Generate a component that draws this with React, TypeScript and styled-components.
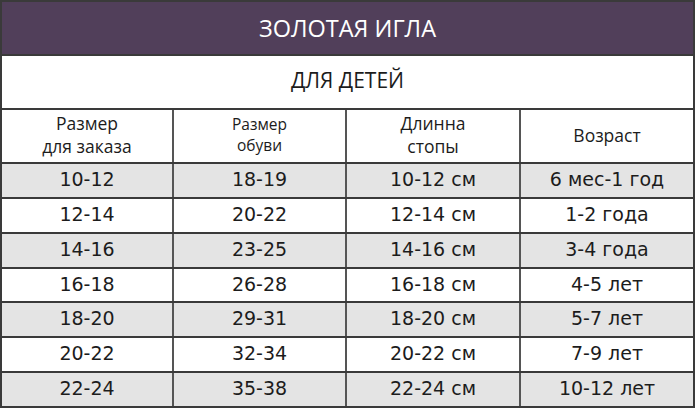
import React from "react";
import styled, { createGlobalStyle } from "styled-components";

const Global = createGlobalStyle`
  html, body { margin: 0; padding: 0; background: #ffffff; }
  * { box-sizing: border-box; }
`;

const Frame = styled.div`
  width: 695px;
  height: 408px;
  border: 2px solid #3a3a3a;
  display: flex;
  flex-direction: column;
  background: #ffffff;
  color: #1c1c1c;
`;

const Title = styled.div`
  height: 54px;
  flex: none;
  background: #513f5a;
  color: #ffffff;
  border-bottom: 2px solid #3a3a3a;
  display: flex;
  align-items: center;
  justify-content: center;
  font-family: "Open Sans", sans-serif;
  font-size: 23.5px;
  padding-bottom: 1px;
`;

const Subtitle = styled.div`
  height: 54px;
  flex: none;
  border-bottom: 2px solid #3a3a3a;
  display: flex;
  align-items: center;
  justify-content: center;
  font-family: "Open Sans", sans-serif;
  font-size: 21px;
  padding-bottom: 4px;
`;

const Row = styled.div<{ $head?: boolean; $shade?: boolean }>`
  display: grid;
  grid-template-columns: 172px 173px 174px 1fr;
  height: ${(p) => (p.$head ? "54px" : "auto")};
  flex: ${(p) => (p.$head ? "none" : "1")};
  background: ${(p) => (p.$shade ? "#e4e4e4" : "#ffffff")};
  border-bottom: 2px solid #3a3a3a;
  &:last-child { border-bottom: none; }
`;

const Body = styled.div`
  flex: 1;
  display: flex;
  flex-direction: column;
`;

const Cell = styled.div`
  display: flex;
  align-items: center;
  justify-content: center;
  text-align: center;
  border-right: 2px solid #555555;
  &:last-child { border-right: none; }
  font-family: "DejaVu Sans", sans-serif;
  font-size: 19px;
  line-height: 1;
  padding-bottom: 2px;
`;

const HeadCell = styled(Cell)<{ $size: number; $lh: number }>`
  font-family: "Open Sans", sans-serif;
  font-size: ${(p) => p.$size}px;
  line-height: ${(p) => p.$lh}px;
  padding-bottom: 2px;
`;

const HeadLine = styled.div`
  white-space: nowrap;
`;

const headers: { lines: string[]; size: number; lh: number }[] = [
  { lines: ["Размер", "для заказа"], size: 17.5, lh: 23 },
  { lines: ["Размер", "обуви"], size: 15.5, lh: 21 },
  { lines: ["Длинна", "стопы"], size: 17.5, lh: 23 },
  { lines: ["Возраст"], size: 17.5, lh: 23 },
];

const rows = [
  ["10-12", "18-19", "10-12 см", "6 мес-1 год"],
  ["12-14", "20-22", "12-14 см", "1-2 года"],
  ["14-16", "23-25", "14-16 см", "3-4 года"],
  ["16-18", "26-28", "16-18 см", "4-5 лет"],
  ["18-20", "29-31", "18-20 см", "5-7 лет"],
  ["20-22", "32-34", "20-22 см", "7-9 лет"],
  ["22-24", "35-38", "22-24 см", "10-12 лет"],
];

export default function App() {
  return (
    <>
      <Global />
      <Frame>
        <Title>ЗОЛОТАЯ ИГЛА</Title>
        <Subtitle>ДЛЯ ДЕТЕЙ</Subtitle>
        <Row $head>
          {headers.map((h, i) => (
            <HeadCell key={i} $size={h.size} $lh={h.lh}>
              <div>
                {h.lines.map((line, j) => (
                  <HeadLine key={j}>{line}</HeadLine>
                ))}
              </div>
            </HeadCell>
          ))}
        </Row>
        <Body>
          {rows.map((r, i) => (
            <Row key={i} $shade={i % 2 === 0}>
              {r.map((c, j) => (
                <Cell key={j}>{c}</Cell>
              ))}
            </Row>
          ))}
        </Body>
      </Frame>
    </>
  );
}
